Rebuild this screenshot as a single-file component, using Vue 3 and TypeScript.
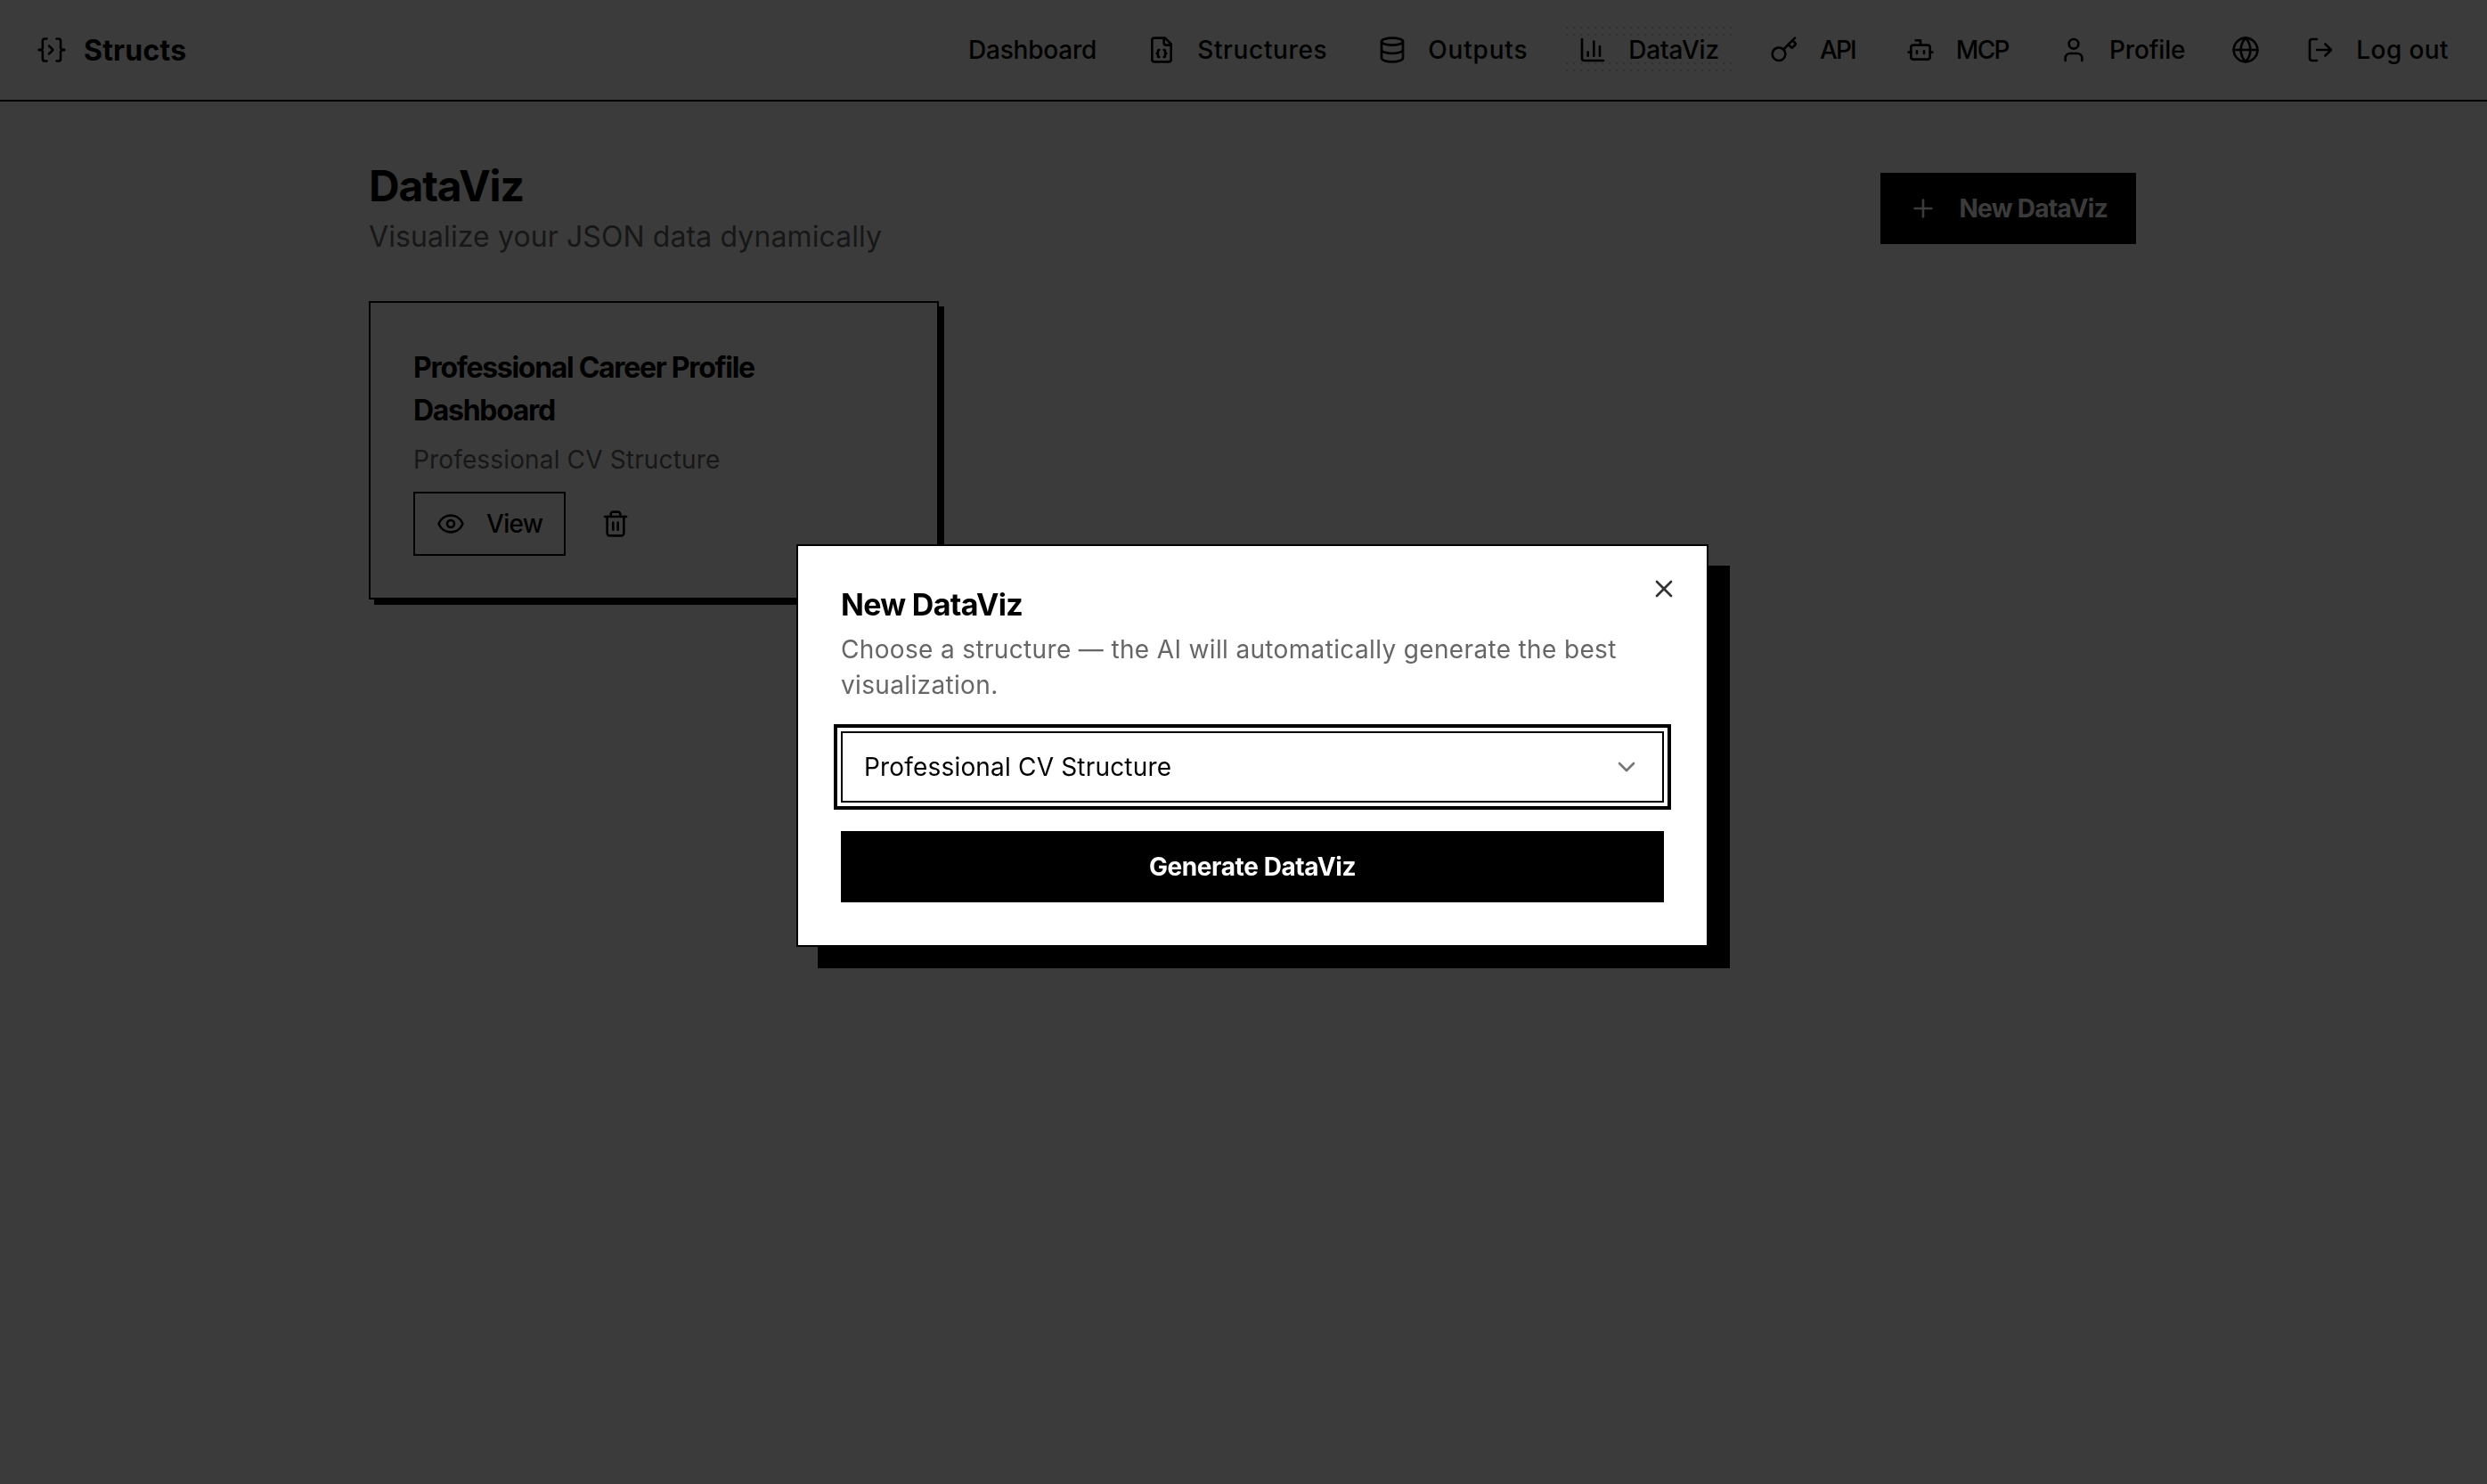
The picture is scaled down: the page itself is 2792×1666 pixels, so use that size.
<script setup lang="ts">
const circle = (cx: number, cy: number, r: number): string =>
  `M${cx - r} ${cy}a${r} ${r} 0 1 0 ${2 * r} 0a${r} ${r} 0 1 0 ${-2 * r} 0`

const icons: Record<string, string[]> = {
  file: [
    'M15 2H6a2 2 0 0 0-2 2v16a2 2 0 0 0 2 2h12a2 2 0 0 0 2-2V7Z',
    'M14 2v4a2 2 0 0 0 2 2h4',
    'M10 12a1 1 0 0 0-1 1v1a1 1 0 0 1-1 1 1 1 0 0 1 1 1v1a1 1 0 0 0 1 1',
    'M14 18a1 1 0 0 0 1-1v-1a1 1 0 0 1 1-1 1 1 0 0 1-1-1v-1a1 1 0 0 0-1-1',
  ],
  database: ['M3 5a9 3 0 1 0 18 0a9 3 0 1 0-18 0', 'M3 5V19A9 3 0 0 0 21 19V5', 'M3 12A9 3 0 0 0 21 12'],
  chart: ['M3 3v16a2 2 0 0 0 2 2h16', 'M18 17V9', 'M13 17V5', 'M8 17v-3'],
  key: ['m15.5 7.5 2.3 2.3a1 1 0 0 0 1.4 0l2.1-2.1a1 1 0 0 0 0-1.4L19 4', 'm21 2-9.6 9.6', circle(7.5, 15.5, 5.5)],
  bot: [
    'M12 8V4H8',
    'M6 8h12a2 2 0 0 1 2 2v8a2 2 0 0 1-2 2H6a2 2 0 0 1-2-2v-8a2 2 0 0 1 2-2Z',
    'M2 14h2',
    'M20 14h2',
    'M15 13v2',
    'M9 13v2',
  ],
  user: ['M19 21v-2a4 4 0 0 0-4-4H9a4 4 0 0 0-4 4v2', circle(12, 7, 4)],
  globe: [circle(12, 12, 10), 'M12 2a14.5 14.5 0 0 0 0 20 14.5 14.5 0 0 0 0-20', 'M2 12h20'],
  logout: ['M9 21H5a2 2 0 0 1-2-2V5a2 2 0 0 1 2-2h4', 'm16 17 5-5-5-5', 'M21 12H9'],
  eye: [
    'M2.062 12.348a1 1 0 0 1 0-.696 10.75 10.75 0 0 1 19.876 0 1 1 0 0 1 0 .696 10.75 10.75 0 0 1-19.876 0',
    circle(12, 12, 3),
  ],
  trash: [
    'M3 6h18',
    'M19 6v14c0 1-1 2-2 2H7c-1 0-2-1-2-2V6',
    'M8 6V4c0-1 1-2 2-2h4c1 0 2 1 2 2v2',
    'M10 11v6',
    'M14 11v6',
  ],
  x: ['M18 6 6 18', 'm6 6 12 12'],
  chevron: ['m6 9 6 6 6-6'],
  plus: ['M5 12h14', 'M12 5v14'],
}

interface NavItem {
  label: string
  icon?: string
  active?: boolean
  tracking?: number
}

const nav: NavItem[] = [
  { label: 'Dashboard', tracking: -0.2 },
  { label: 'Structures', icon: 'file', tracking: 0.65 },
  { label: 'Outputs', icon: 'database', tracking: 0.8 },
  { label: 'DataViz', icon: 'chart', active: true, tracking: -0.17 },
  { label: 'API', icon: 'key', tracking: -1.9 },
  { label: 'MCP', icon: 'bot', tracking: -1.6 },
  { label: 'Profile', icon: 'user', tracking: -0.15 },
  { label: '', icon: 'globe' },
  { label: 'Log out', icon: 'logout', tracking: 0.4 },
]
</script>

<template>
  <div class="page">
    <header class="topbar">
      <a class="brand">
        <svg class="logo" viewBox="0 0 32 28" aria-hidden="true">
          <path d="M10.5 1.5H8.5a2.6 2.6 0 0 0-2.6 2.6v6.4a3 3 0 0 1-4.2 3.5 3 3 0 0 1 4.2 3.5v6.4a2.6 2.6 0 0 0 2.6 2.6h2" />
          <path d="M21.5 1.5h2a2.6 2.6 0 0 1 2.6 2.6v6.4a3 3 0 0 0 4.2 3.5 3 3 0 0 0-4.2 3.5v6.4a2.6 2.6 0 0 1-2.6 2.6h-2" />
          <path d="M13 9.5l4.5 4.5-4.5 4.5" />
        </svg>
        <span>Structs</span>
      </a>
      <nav class="nav">
        <a
          v-for="item in nav"
          :key="item.icon ?? item.label"
          class="nav-item"
          :class="{ active: item.active, 'icon-only': !item.label }"
        >
          <svg v-if="item.icon" class="ic" viewBox="0 0 24 24" aria-hidden="true">
            <path v-for="d in icons[item.icon]" :key="d" :d="d" />
          </svg>
          <span v-if="item.label" :style="{ letterSpacing: `${item.tracking}px` }">{{ item.label }}</span>
        </a>
      </nav>
    </header>

    <main class="main">
      <div class="head">
        <div>
          <h1>DataViz</h1>
          <p class="subtitle">Visualize your JSON data dynamically</p>
        </div>
        <button class="new-btn" type="button">
          <svg class="ic" viewBox="0 0 24 24" aria-hidden="true">
            <path v-for="d in icons.plus" :key="d" :d="d" />
          </svg>
          <span>New DataViz</span>
        </button>
      </div>

      <article class="card">
        <h2>Professional Career Profile Dashboard</h2>
        <p class="card-sub">Professional CV Structure</p>
        <div class="card-actions">
          <button class="view-btn" type="button">
            <svg class="ic" viewBox="0 0 24 24" aria-hidden="true">
              <path v-for="d in icons.eye" :key="d" :d="d" />
            </svg>
            <span>View</span>
          </button>
          <button class="trash-btn" type="button" aria-label="Delete">
            <svg class="ic" viewBox="0 0 24 24" aria-hidden="true">
              <path v-for="d in icons.trash" :key="d" :d="d" />
            </svg>
          </button>
        </div>
      </article>
    </main>

    <div class="overlay">
      <section class="modal">
        <button class="close" type="button" aria-label="Close">
          <svg class="ic" viewBox="0 0 24 24" aria-hidden="true">
            <path v-for="d in icons.x" :key="d" :d="d" />
          </svg>
        </button>
        <h3>New DataViz</h3>
        <p class="desc">Choose a structure — the AI will automatically generate the best visualization.</p>
        <div class="select">
          <span>Professional CV Structure</span>
          <svg class="ic chev" viewBox="0 0 24 24" aria-hidden="true">
            <path v-for="d in icons.chevron" :key="d" :d="d" />
          </svg>
        </div>
        <button class="generate" type="button">Generate DataViz</button>
      </section>
    </div>
  </div>
</template>

<style scoped>
.page {
  min-height: 1666px;
  background: #fff;
  color: #000;
  font-family: Inter, "Liberation Sans", sans-serif;
  font-size: 28px;
}
button {
  font: inherit;
  color: inherit;
  background: none;
  border: 0;
  padding: 0;
}
.ic {
  width: 32px;
  height: 32px;
  flex: none;
  fill: none;
  stroke: currentColor;
  stroke-width: 2;
  stroke-linecap: round;
  stroke-linejoin: round;
}
.topbar {
  height: 114px;
  box-sizing: border-box;
  border-bottom: 2px solid #000;
  display: flex;
  align-items: center;
  justify-content: space-between;
  padding: 0 26px 0 42px;
}
.brand {
  display: flex;
  align-items: center;
  gap: 20px;
  font-size: 32px;
  font-weight: 700;
  letter-spacing: 0.2px;
}
.logo {
  width: 32px;
  height: 28px;
  fill: none;
  stroke: currentColor;
  stroke-width: 2.6;
  stroke-linecap: round;
  stroke-linejoin: round;
}
.nav {
  display: flex;
  align-items: center;
  gap: 23px;
}
.nav-item {
  position: relative;
  display: flex;
  align-items: center;
  gap: 24px;
  height: 58px;
  padding: 0 17px;
  font-weight: 500;
}
.nav-item.icon-only {
  padding: 0 12px;
}
.nav-item.active::before {
  content: "";
  position: absolute;
  inset: 0;
  background-image: radial-gradient(circle, #d8d8d8 0.8px, transparent 1px);
  background-size: 8px 8px;
  -webkit-mask-image: linear-gradient(#000 0 26%, transparent 26% 70%, #000 70%);
  mask-image: linear-gradient(#000 0 26%, transparent 26% 70%, #000 70%);
}
.nav-item > * {
  position: relative;
}
.main {
  width: 1984px;
  margin-left: 414px;
}
.head {
  display: flex;
  justify-content: space-between;
  align-items: flex-start;
  padding-top: 68px;
  margin-bottom: 50px;
}
h1 {
  margin: -1px 0 0;
  font-size: 48px;
  line-height: 56px;
  font-weight: 700;
  letter-spacing: -1.2px;
}
.subtitle {
  margin: 7px 0 0;
  font-size: 32px;
  line-height: 44px;
  letter-spacing: 0.1px;
  color: #666;
}
.new-btn {
  margin-top: 12px;
  display: flex;
  align-items: center;
  gap: 24px;
  height: 80px;
  padding: 0 32px;
  background: #000;
  color: #fff;
  font-weight: 700;
  letter-spacing: -0.7px;
}
.card {
  width: 640px;
  box-sizing: border-box;
  border: 2px solid #000;
  padding: 49px 48px 47px;
  box-shadow: 6px 6px 0 #000;
  background: #fff;
}
h2 {
  margin: 0;
  font-size: 32px;
  line-height: 48px;
  font-weight: 700;
  letter-spacing: -1.3px;
}
.card-sub {
  margin: 9px 0 14px;
  line-height: 44px;
  letter-spacing: 0.15px;
  color: #666;
}
.card-actions {
  display: flex;
  align-items: center;
  gap: 40px;
}
.view-btn {
  display: flex;
  align-items: center;
  gap: 24px;
  height: 72px;
  box-sizing: border-box;
  border: 2px solid #000;
  padding: 0 24px;
  font-weight: 500;
  letter-spacing: -0.7px;
}
.trash-btn {
  display: flex;
}
.overlay {
  position: fixed;
  inset: 0;
  background: rgba(0, 0, 0, 0.77);
  display: flex;
  align-items: center;
  justify-content: center;
  padding: 8px 0 0 20px;
}
.modal {
  position: relative;
  width: 1024px;
  box-sizing: border-box;
  border: 2px solid #000;
  background: #fff;
  padding: 48px;
  box-shadow: 24px 24px 0 #000;
}
.close {
  position: absolute;
  top: 32px;
  right: 32px;
  display: flex;
  color: #333;
}
h3 {
  margin: 0 0 12px;
  font-size: 34px;
  line-height: 36px;
  font-weight: 700;
  letter-spacing: -0.7px;
}
.desc {
  margin: 0 0 32px;
  line-height: 40px;
  letter-spacing: 0.35px;
  color: #666;
}
.select {
  height: 80px;
  box-sizing: border-box;
  border: 2px solid #000;
  box-shadow: 0 0 0 4px #fff, 0 0 0 8px #000;
  display: flex;
  align-items: center;
  justify-content: space-between;
  padding: 0 24px;
  letter-spacing: 0.18px;
}
.chev {
  color: #777;
}
.generate {
  display: block;
  width: 100%;
  height: 80px;
  margin-top: 32px;
  background: #000;
  color: #fff;
  font-weight: 700;
  letter-spacing: -0.4px;
}
</style>
